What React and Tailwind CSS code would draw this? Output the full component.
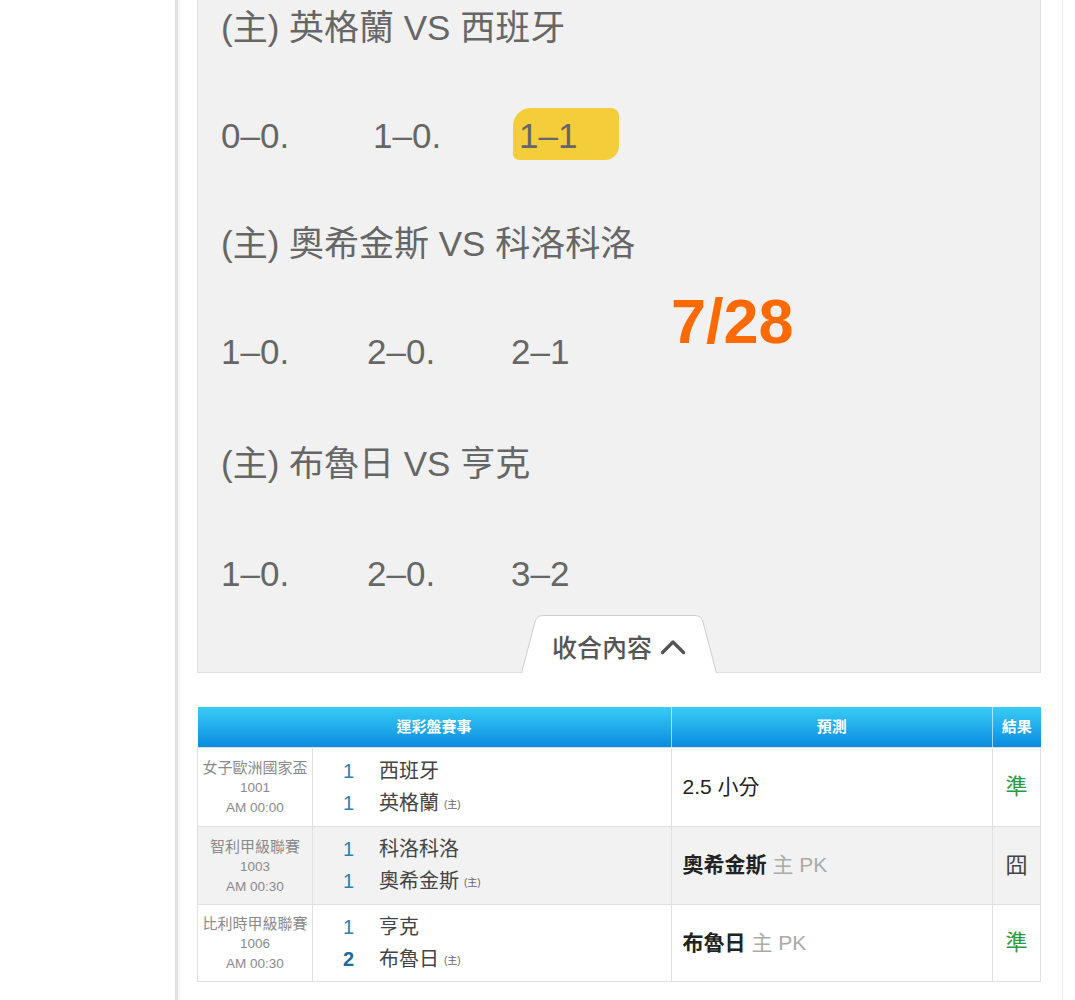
import React from "react";

const FONT = { fontFamily: '"Liberation Sans", "Noto Sans CJK TC", sans-serif' };

const lines = [
  { kind: "title", text: "(主) 英格蘭 VS 西班牙", h: "h-[108px]" },
  { kind: "score", items: ["0–0.", "1–0.", "1–1"], w: ["w-[152px]", "w-[146px]"], hl: true, h: "h-[108px]" },
  { kind: "title", text: "(主) 奧希金斯 VS 科洛科洛", h: "h-[108px]" },
  { kind: "score", items: ["1–0.", "2–0.", "2–1"], w: ["w-[146px]", "w-[144px]"], h: "h-[108px]" },
  { kind: "title", text: "(主) 布魯日 VS 亨克", h: "h-[116px]" },
  { kind: "score", items: ["1–0.", "2–0.", "3–2"], w: ["w-[146px]", "w-[144px]"], h: "h-[104px]" },
];

const rows = [
  {
    league: "女子歐洲國家盃", no: "1001", time: "AM 00:00",
    teams: [["1", "西班牙", false, false], ["1", "英格蘭", true, false]],
    pick: "2.5 小分", pickBold: false, pickExtra: null,
    result: "準", win: true, bg: "bg-white", h: "h-[79px]",
  },
  {
    league: "智利甲級聯賽", no: "1003", time: "AM 00:30",
    teams: [["1", "科洛科洛", false, false], ["1", "奧希金斯", true, false]],
    pick: "奧希金斯", pickBold: true, pickExtra: "主 PK",
    result: "囧", win: false, bg: "bg-[#f2f2f2]", h: "h-[78px]",
  },
  {
    league: "比利時甲級聯賽", no: "1006", time: "AM 00:30",
    teams: [["1", "亨克", false, false], ["2", "布魯日", true, true]],
    pick: "布魯日", pickBold: true, pickExtra: "主 PK",
    result: "準", win: true, bg: "bg-white", h: "h-[77px]",
  },
];

function Tab() {
  return (
    <div className="relative z-10 mt-[-10px] mb-[-1px] flex h-[58px] justify-center">
      <div className="relative flex h-[58px] w-[196px] items-center justify-center pt-[8px]">
        <svg className="absolute inset-0" width="196" height="58" viewBox="0 0 196 58">
          <path
            d="M0.5 58 L14 7 Q15.6 0.5 22 0.5 L174 0.5 Q180.4 0.5 182 7 L195.5 58 Z"
            fill="#ffffff"
            stroke="none"
          />
          <path
            d="M0.5 58 L14 7 Q15.6 0.5 22 0.5 L174 0.5 Q180.4 0.5 182 7 L195.5 58"
            fill="none"
            stroke="#cfcfcf"
            strokeWidth="1"
          />
        </svg>
        <span className="relative text-[25px] font-medium leading-none text-[#555]">收合內容</span>
        <svg className="relative ml-[8px] mt-[-2px]" width="26" height="16" viewBox="0 0 26 16">
          <polyline points="2.5,13.5 13,3 23.5,13.5" fill="none" stroke="#555" strokeWidth="3.4" strokeLinecap="round" strokeLinejoin="round" />
        </svg>
      </div>
    </div>
  );
}

function ScoreRow({ line }) {
  return (
    <div className={`flex items-center ${line.h}`}>
      <span className={`${line.w[0]} leading-none`}>{line.items[0]}</span>
      <span className={`${line.w[1]} leading-none`}>{line.items[1]}</span>
      <span className="relative leading-none">
        {line.hl && (
          <span className="absolute left-[-6px] top-[-10px] h-[52px] w-[106px] rounded-[18px_8px_14px_6px] bg-[#f4cd3a]" />
        )}
        <span className="relative">{line.items[2]}</span>
      </span>
    </div>
  );
}

export default function App() {
  return (
    <div className="flex h-[1000px] w-full overflow-hidden bg-white" style={FONT}>
      <div className="w-[175px] shrink-0" />
      <div className="flex w-[888px] shrink-0 flex-col border-l-[3px] border-r border-l-[#e2e2e2] border-r-[#efefef] pl-[19px] pr-[21px] shadow-[inset_4px_0_4px_-3px_rgba(0,0,0,0.06)]">
        {/* Gray content box */}
        <div className="relative mt-[-27px] border border-t-0 border-[#e0e0e0] bg-[#f1f1f1]">
          <div className="pl-[23px] text-[35px] text-[#666]">
            {lines.map((line, i) =>
              line.kind === "title" ? (
                <div key={i} className={`flex items-center ${line.h}`}>
                  <span className="leading-none">{line.text}</span>
                </div>
              ) : (
                <ScoreRow key={i} line={line} />
              )
            )}
          </div>
          <div className="absolute left-[473px] top-[317px] text-[63px] font-bold leading-none text-[#ff6a00]">
            7/28
          </div>
          <Tab />
        </div>

        {/* Table */}
        <table className="mt-[34px] w-full border-collapse">
          <thead>
            <tr className="h-[40px]">
              <th colSpan={2} className="border-r border-r-white/60 bg-linear-to-b from-[#38ccf5] to-[#0a8be0] text-center text-[15px] font-bold text-white">
                運彩盤賽事
              </th>
              <th className="w-[322px] border-r border-r-white/60 bg-linear-to-b from-[#38ccf5] to-[#0a8be0] text-center text-[15px] font-bold text-white">
                預測
              </th>
              <th className="w-[48px] bg-linear-to-b from-[#38ccf5] to-[#0a8be0] text-center text-[15px] font-bold text-white">
                結果
              </th>
            </tr>
          </thead>
          <tbody>
            {rows.map((r, i) => (
              <tr key={i} className={`${r.h} ${r.bg}`}>
                <td className="w-[115px] border border-[#e0e0e0] px-0 pt-[2px] text-center align-middle text-[#8a8a8a]">
                  <div className="whitespace-nowrap text-[15px] leading-[21px]">{r.league}</div>
                  <div className="text-[13.5px] leading-[20px]">{r.no}</div>
                  <div className="text-[13.5px] leading-[20px]">{r.time}</div>
                </td>
                <td className="w-[359px] border border-[#e0e0e0] pl-[30px] align-middle">
                  {r.teams.map(([n, name, home, bold], j) => (
                    <div key={j} className="flex h-[32px] items-center">
                      <span className={`w-[36px] text-[20px] leading-none ${bold ? "font-bold text-[#1d6a9c]" : "text-[#2f80b5]"}`}>{n}</span>
                      <span className="text-[20px] leading-none text-[#444]">{name}</span>
                      {home && <span className="ml-[5px] mt-[4px] text-[10px] leading-none text-[#666]">(主)</span>}
                    </div>
                  ))}
                </td>
                <td className="border border-[#e0e0e0] pl-[11px] align-middle text-[21px] text-[#222]">
                  <span className={r.pickBold ? "font-semibold" : ""}>{r.pick}</span>
                  {r.pickExtra && <span className="ml-[6px] text-[#aaa]">{r.pickExtra}</span>}
                </td>
                <td className={`border border-[#e0e0e0] text-center align-middle text-[22px] ${r.win ? "text-[#2e9a40]" : "text-[#444]"}`}>
                  {r.result}
                </td>
              </tr>
            ))}
          </tbody>
        </table>
      </div>
    </div>
  );
}
